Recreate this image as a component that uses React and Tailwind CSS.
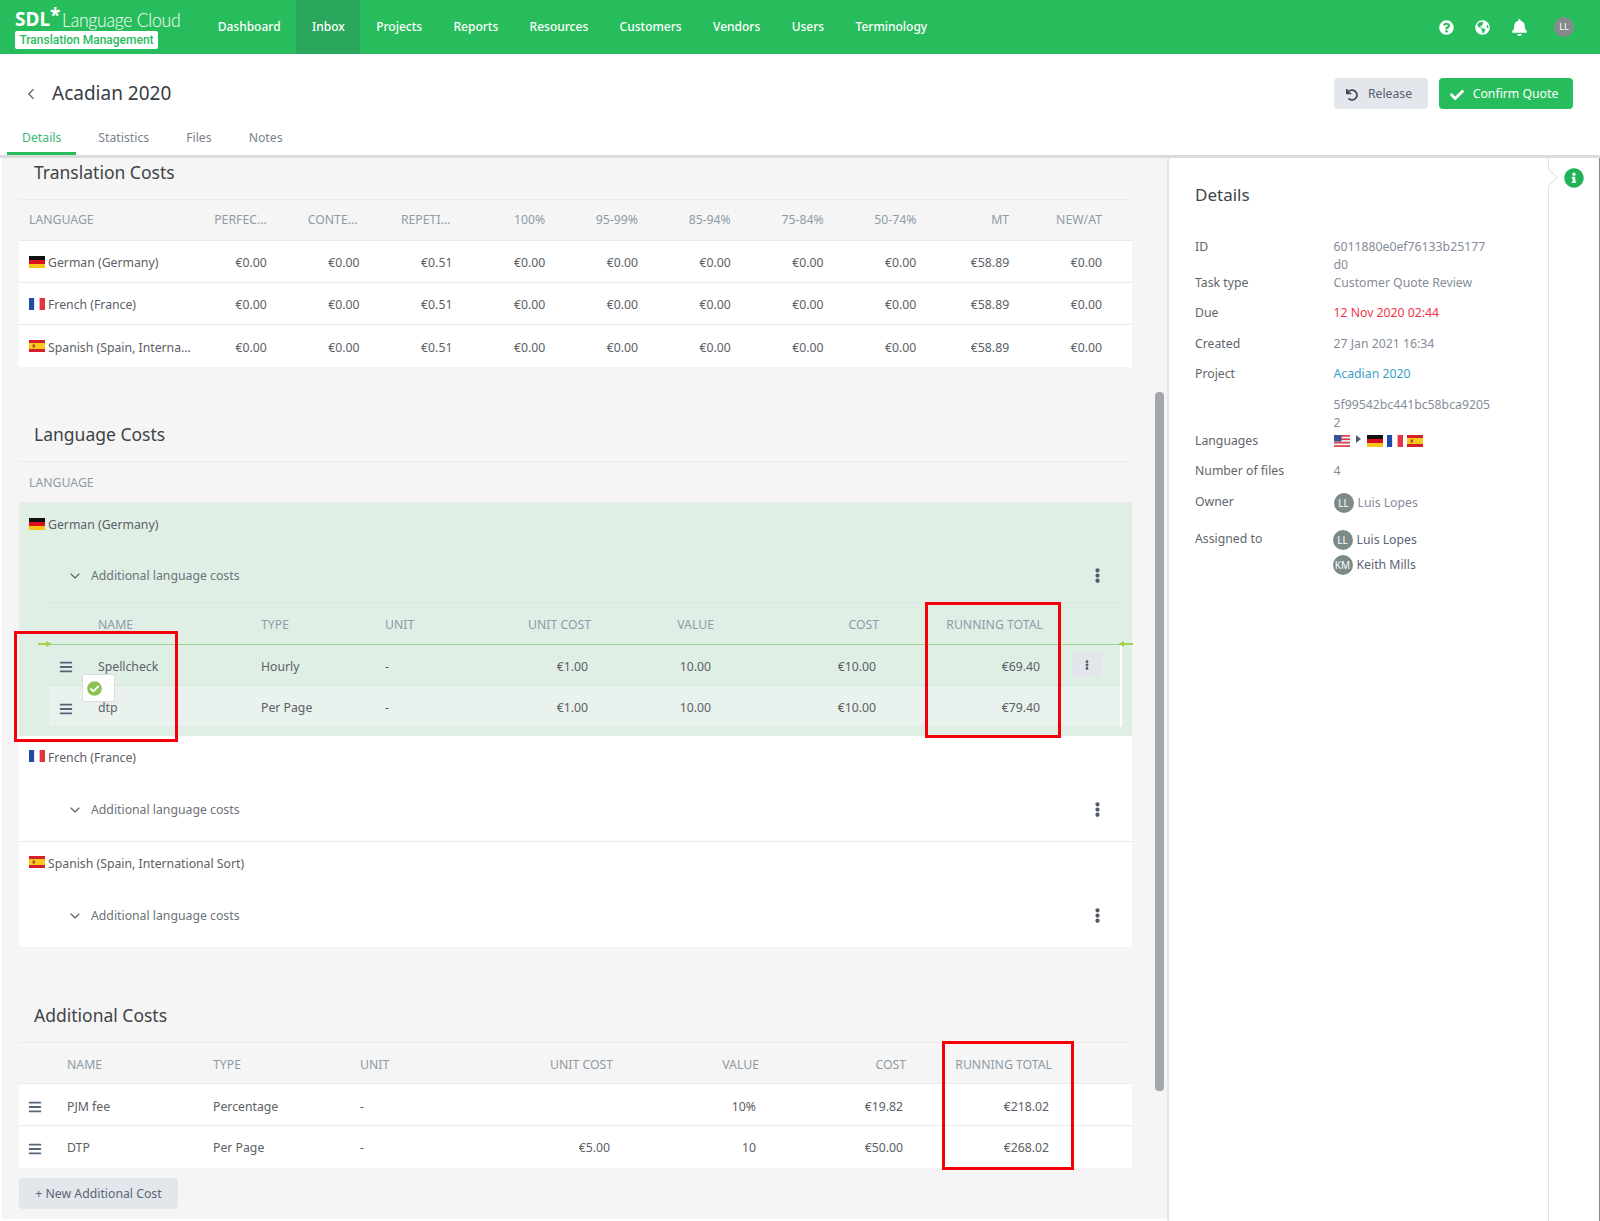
import { ChevronLeft, ChevronDown } from 'lucide-react';
import { FaQuestionCircle, FaGlobeAmericas, FaBell, FaCheck, FaUndo, FaInfoCircle, FaCheckCircle, FaBars, FaEllipsisV } from 'react-icons/fa';

const nav = ['Dashboard', 'Inbox', 'Projects', 'Reports', 'Resources', 'Customers', 'Vendors', 'Users', 'Terminology'];
const tabs = ['Details', 'Statistics', 'Files', 'Notes'];
const costCols = ['PERFEC...', 'CONTE...', 'REPETI...', '100%', '95-99%', '85-94%', '75-84%', '50-74%', 'MT', 'NEW/AT'];
const costVals = ['€0.00', '€0.00', '€0.51', '€0.00', '€0.00', '€0.00', '€0.00', '€0.00', '€58.89', '€0.00'];

function FlagDE() {
    return (
        <svg width="16" height="12" viewBox="0 0 16 12" className="shrink-0">
            <rect width="16" height="4" y="0" fill="#111" />
            <rect width="16" height="4" y="4" fill="#d9101c" />
            <rect width="16" height="4" y="8" fill="#f5c518" />
        </svg>
    );
}

function FlagFR() {
    return (
        <svg width="16" height="12" viewBox="0 0 16 12" className="shrink-0">
            <rect width="5.4" height="12" x="0" fill="#1f4aa8" />
            <rect width="5.4" height="12" x="5.3" fill="#fff" />
            <rect width="5.4" height="12" x="10.6" fill="#e5343d" />
        </svg>
    );
}

function FlagES() {
    return (
        <svg width="16" height="12" viewBox="0 0 16 12" className="shrink-0">
            <rect width="16" height="12" fill="#d5202a" />
            <rect width="16" height="6" y="3" fill="#f8c91c" />
            <rect width="2.5" height="3" x="3.5" y="4.5" fill="#b5482c" />
        </svg>
    );
}

function FlagUS() {
    return (
        <svg width="16" height="12" viewBox="0 0 16 12" className="shrink-0">
            <rect width="16" height="12" fill="#f3f3f6" />
            <rect width="16" height="1.7" y="0" fill="#d8404a" />
            <rect width="16" height="1.7" y="3.4" fill="#d8404a" />
            <rect width="16" height="1.7" y="6.8" fill="#d8404a" />
            <rect width="16" height="1.7" y="10.2" fill="#d8404a" />
            <rect width="7.5" height="6.5" fill="#3d4f94" />
        </svg>
    );
}

function SectionTitle({ children, className }) {
    return (
        <div className={`h-[41px] pl-[15px] text-[17.5px] leading-[28px] text-[#3f4448] ${className}`}>{children}</div>
    );
}

function Kebab() {
    return <FaEllipsisV className="text-[15px] text-[#4f5b6c]" />;
}

function Language({ flag, name }) {
    return (
        <div className="flex items-center gap-[3px] whitespace-nowrap pl-[10px] text-[#5b6064]">
            <span className="mb-[4px]">{flag}</span>
            {name}
        </div>
    );
}

function CostRow({ flag, name, last }) {
    return (
        <div className={`grid h-[42px] grid-cols-[155px_repeat(10,92.8px)] items-center bg-white pt-[4px] ${last ? '' : 'border-b border-[#e8ecee]'}`}>
            <Language flag={flag} name={name} />
            {costVals.map((v, i) => (
                <div key={i} className="text-right text-[#5b6064]">{v}</div>
            ))}
        </div>
    );
}

function LanguageCost({ flag, name, green, divider, children }) {
    return (
        <div className={green ? 'bg-[#e0efe6] pb-[9px]' : `bg-white ${divider ? 'border-b border-[#e8ecee]' : ''}`}>
            <div className={`flex h-[42px] items-center ${green ? 'pt-[3px]' : 'pt-[2px]'}`}>
                <Language flag={flag} name={name} />
            </div>
            <div className={`flex items-center pl-[48px] pr-[27px] text-[#6b7278] ${green ? 'h-[57px] pt-[6px]' : 'h-[63px] pt-[1px]'}`}>
                <ChevronDown size={16} strokeWidth={1.75} className="-mt-[1px] text-[#56606e]" />
                <span className="ml-[8px]">Additional language costs</span>
                <span className="-mt-[2px] ml-auto"><Kebab /></span>
            </div>
            {children}
        </div>
    );
}

const innerCols = 'grid-cols-[49px_163px_124px_75px_131px_123px_165px_164px_79px]';
const addCols = 'grid-cols-[48px_146px_147px_100px_153px_146px_147px_146px_80px]';

function HeadRow({ cols, className }) {
    return (
        <div className={`grid items-center text-[#8f9ba6] ${cols} ${className}`}>
            <div />
            <div>NAME</div>
            <div>TYPE</div>
            <div>UNIT</div>
            <div className="text-right">UNIT COST</div>
            <div className="text-right">VALUE</div>
            <div className="text-right">COST</div>
            <div className="text-right">RUNNING TOTAL</div>
        </div>
    );
}

function ItemRow({ cols, className, handleClass, name, type, unitCost, value, cost, total, action }) {
    return (
        <div className={`relative grid items-center text-[#5b6064] ${cols} ${className}`}>
            <div className={handleClass}><FaBars className="text-[14px] text-[#56647a]" /></div>
            <div>{name}</div>
            <div>{type}</div>
            <div>-</div>
            <div className="pr-[3px] text-right">{unitCost}</div>
            <div className="pr-[3px] text-right">{value}</div>
            <div className="pr-[3px] text-right">{cost}</div>
            <div className="pr-[3px] text-right">{total}</div>
            {action && (
                <div className="-mt-[5px] pl-[29px]">
                    <div className="flex h-[27px] w-[30px] items-center justify-center rounded bg-[#e3e7eb]">
                        <FaEllipsisV className="text-[10px] text-[#4f5b6c]" />
                    </div>
                </div>
            )}
        </div>
    );
}

function DetailRow({ label, children, className }) {
    return (
        <div className={`flex leading-[18px] ${className || 'mb-[12.6px]'}`}>
            <div className="w-[138.5px] shrink-0 text-[#5f666d]">{label}</div>
            <div className="w-[162px] break-all text-[#858c9a]">{children}</div>
        </div>
    );
}

function Avatar({ text }) {
    return (
        <span className="flex h-[20px] w-[20px] shrink-0 items-center justify-center rounded-full bg-[#7c8a8a] text-[10px] text-white">{text}</span>
    );
}

export default function App() {
    return (
        <div className="relative flex h-screen w-[1600px] flex-col overflow-hidden bg-white font-['Noto_Sans',sans-serif] text-[12.25px]">
            {/* top bar */}
            <div className="flex h-[54px] shrink-0 items-stretch bg-[#28bd5c] text-white">
                <div className="w-[202px] shrink-0 pl-[15px]">
                    <div className="flex h-[29px] items-end whitespace-nowrap leading-none">
                        <span className="text-[19px] font-bold">SDL</span>
                        <span className="mb-[4px] text-[19px] font-bold leading-none">*</span>
                        <span className="ml-[2px] inline-block origin-left scale-x-[0.88] font-['Lato',sans-serif] text-[20px] font-light tracking-[-0.3px]">Language Cloud</span>
                    </div>
                    <div className="mt-[2px] w-[143px] whitespace-nowrap rounded-[2px] bg-white text-center font-['Roboto',sans-serif] text-[12px] font-medium leading-[18px] text-[#28bd5c]">
                        Translation Management
                    </div>
                </div>
                {nav.map((n) => (
                    <div key={n} className={`flex items-center px-[15.7px] text-[12px] font-medium ${n === 'Inbox' ? 'bg-[#2aa65d]' : ''}`}>{n}</div>
                ))}
                <div className="ml-auto flex items-center pr-[26px]">
                    <FaQuestionCircle className="text-[15px]" />
                    <FaGlobeAmericas className="ml-[21px] text-[15px]" />
                    <FaBell className="ml-[21px] text-[17px]" />
                    <span className="ml-[26px] flex h-[20px] w-[20px] items-center justify-center rounded-full bg-[#858b8c] text-[9px]">LL</span>
                </div>
            </div>

            {/* page header */}
            <div className="relative h-[104px] shrink-0 border-b-[3px] border-[#dcdcdc]">
                <div className="flex h-[76px] items-center pl-[22px] pr-[27px] pt-[3px]">
                    <ChevronLeft size={18} strokeWidth={1.5} className="text-[#56606e]" />
                    <div className="ml-[12px] text-[19px] text-[#363d45]">Acadian 2020</div>
                    <div className="ml-auto flex gap-[11px]">
                        <div className="flex h-[31px] w-[94px] items-center justify-center gap-[10px] rounded-[4px] bg-[#e3e7eb] pr-[4px] pt-[2px] text-[#566072]">
                            <FaUndo className="text-[12px] text-[#3f4757]" />
                            Release
                        </div>
                        <div className="flex h-[31px] w-[134px] items-center justify-center gap-[9px] rounded-[4px] bg-[#28bd5c] pr-[4px] pt-[2px] text-white">
                            <FaCheck className="text-[14px]" />
                            Confirm Quote
                        </div>
                    </div>
                </div>
                <div className="flex h-[25px] gap-[7px] pl-[7px]">
                    {tabs.map((t) => (
                        <div key={t} className={`h-[25px] px-[15px] leading-[16px] ${t === 'Details' ? 'border-b-[3px] border-[#28bd5c] text-[#3db874]' : 'text-[#7a8290]'}`}>{t}</div>
                    ))}
                </div>
            </div>

            <div className="flex min-h-0 flex-1">
                {/* main */}
                <div className="relative w-[1167px] shrink-0 overflow-hidden border-b-2 border-l-2 border-white bg-[#f5f5f5] pl-[17px]">
                    <div className="w-[1113px]">
                        <SectionTitle>Translation Costs</SectionTitle>
                        <div className="grid h-[42px] grid-cols-[155px_repeat(10,92.8px)] items-center border-y border-[#e8ecee] text-[#8f9ba6]">
                            <div className="pl-[10px]">LANGUAGE</div>
                            {costCols.map((c, i) => (
                                <div key={c} className={`text-right ${i === 1 || i === 2 ? 'pr-[2px]' : ''}`}>{c}</div>
                            ))}
                        </div>
                        <CostRow flag={<FlagDE />} name="German (Germany)" />
                        <CostRow flag={<FlagFR />} name="French (France)" />
                        <CostRow flag={<FlagES />} name="Spanish (Spain, Interna..." last />

                        <SectionTitle className="mt-[53px]">Language Costs</SectionTitle>
                        <div className="flex h-[42px] items-center border-y border-[#e8ecee] pl-[10px] pt-[2px] text-[#8f9ba6]">LANGUAGE</div>
                        <LanguageCost green flag={<FlagDE />} name="German (Germany)">
                            <div className="ml-[30px] mr-[10px] border-t border-[#d9e8df]">
                                <HeadRow cols={innerCols} className="h-[41px] pt-[4px]" />
                                <div className="border-r-2 border-white">
                                    <ItemRow
                                        cols={innerCols}
                                        className="h-[42px] border-b border-[#d9e8df] pt-[5px]"
                                        handleClass="pl-[10px]"
                                        name="Spellcheck"
                                        type="Hourly"
                                        unitCost="€1.00"
                                        value="10.00"
                                        cost="€10.00"
                                        total="€69.40"
                                        action
                                    />
                                    <ItemRow
                                        cols={innerCols}
                                        className="h-[41px] border-b border-[#dfece4] bg-[#e9f2ec] pt-[5px]"
                                        handleClass="pl-[10px]"
                                        name="dtp"
                                        type="Per Page"
                                        unitCost="€1.00"
                                        value="10.00"
                                        cost="€10.00"
                                        total="€79.40"
                                    />
                                </div>
                            </div>
                        </LanguageCost>
                        <LanguageCost divider flag={<FlagFR />} name="French (France)" />
                        <LanguageCost flag={<FlagES />} name="Spanish (Spain, International Sort)" />

                        <SectionTitle className="mt-[54px]">Additional Costs</SectionTitle>
                        <HeadRow cols={addCols} className="h-[42px] border-y border-[#e8ecee] pt-[5px]" />
                        <ItemRow
                            cols={addCols}
                            className="h-[42px] border-b border-[#e8ecee] bg-white pt-[5px]"
                            handleClass="pl-[9px]"
                            name="PJM fee"
                            type="Percentage"
                            value="10%"
                            cost="€19.82"
                            total="€218.02"
                        />
                        <ItemRow
                            cols={addCols}
                            className="h-[42px] bg-white pt-[3px]"
                            handleClass="pl-[9px]"
                            name="DTP"
                            type="Per Page"
                            unitCost="€5.00"
                            value="10"
                            cost="€50.00"
                            total="€268.02"
                        />
                        <div className="mt-[10px] flex h-[31px] w-[159px] items-center justify-center rounded-[4px] bg-[#e3e7eb] pt-[1px] text-[#5a6478]">+ New Additional Cost</div>
                    </div>

                    {/* scrollbar */}
                    <div className="absolute left-[1153px] top-[234px] h-[699px] w-[9px] rounded-[4px] bg-[#a3a6ab]" />
                </div>

                {/* details panel */}
                <div className="w-[381px] shrink-0 border-l-2 border-[#e4e8ec] pl-[26px]">
                    <div className="pt-[23px] text-[17px] leading-[28px] text-[#3f4448]">Details</div>
                    <div className="mt-[28.5px]">
                        <DetailRow label="ID" className="mb-0">6011880e0ef76133b25177<br />d0</DetailRow>
                        <DetailRow label="Task type">Customer Quote Review</DetailRow>
                        <DetailRow label="Due"><span className="text-[#f0354a]">12 Nov 2020 02:44</span></DetailRow>
                        <DetailRow label="Created">27 Jan 2021 16:34</DetailRow>
                        <DetailRow label="Project"><span className="text-[#3a9fc5]">Acadian 2020</span></DetailRow>
                        <DetailRow label="" className="mb-0">5f99542bc441bc58bca92052</DetailRow>
                        <DetailRow label="Languages">
                            <span className="mt-[3px] flex items-center">
                                <FlagUS />
                                <span className="mx-[6px] -mt-[3px] h-0 w-0 border-y-[4px] border-l-[5px] border-y-transparent border-l-[#4f5b6c]" />
                                <span className="flex gap-[4px]"><FlagDE /><FlagFR /><FlagES /></span>
                            </span>
                        </DetailRow>
                        <DetailRow label="Number of files">4</DetailRow>
                        <DetailRow label="Owner" className="mb-[17px]">
                            <span className="flex items-center gap-[4px]"><Avatar text="LL" />Luis Lopes</span>
                        </DetailRow>
                        <div className="flex leading-[18px]">
                            <div className="w-[137.5px] shrink-0 text-[#5f666d]">Assigned to</div>
                            <div className="flex flex-col gap-[5px] text-[#5b6478]">
                                <span className="flex h-[20px] items-center gap-[4px]"><Avatar text="LL" />Luis Lopes</span>
                                <span className="flex h-[20px] items-center gap-[4px]"><Avatar text="KM" />Keith Mills</span>
                            </div>
                        </div>
                    </div>
                </div>

                {/* side rail */}
                <div className="relative flex-1 border-l border-r border-l-[#e2e2e2] border-r-[#8a8a8a] pl-[15px] pt-[10px]">
                    <span className="absolute -left-[7px] top-[13px] h-[13px] w-[13px] rotate-45 border-r border-t border-[#e2e2e2] bg-white" />
                    <FaInfoCircle className="relative text-[20px] text-[#1fb45a]" />
                </div>
            </div>

            {/* drag line */}
            <div className="absolute left-[38px] top-[643.5px] h-[1.5px] w-[1094px] bg-[#9fd28a]" />
            <div className="absolute left-[38px] top-[643px] h-[2px] w-[10px] bg-[#a6d14e]" />
            <span className="absolute left-[46px] top-[640.5px] h-0 w-0 border-y-[3.5px] border-l-[6px] border-y-transparent border-l-[#a6d14e]" />
            <div className="absolute left-[1122px] top-[643px] h-[2px] w-[11px] bg-[#a6d14e]" />
            <span className="absolute left-[1118px] top-[640.5px] h-0 w-0 border-y-[3.5px] border-r-[6px] border-y-transparent border-r-[#a6d14e]" />

            {/* drag tooltip */}
            <div className="absolute left-[82px] top-[674px] flex h-[28px] w-[33px] items-center border border-[#dcdcdc] bg-white pl-[4px]">
                <FaCheckCircle className="text-[15px] text-[#8cc152]" />
            </div>

            {/* annotations */}
            <div className="absolute left-[14px] top-[631px] h-[111px] w-[164px] border-[3px] border-[#f5000a]" />
            <div className="absolute left-[925px] top-[602px] h-[136px] w-[136px] border-[3px] border-[#f5000a]" />
            <div className="absolute left-[942px] top-[1041px] h-[129px] w-[132px] border-[3px] border-[#f5000a]" />
        </div>
    );
}
